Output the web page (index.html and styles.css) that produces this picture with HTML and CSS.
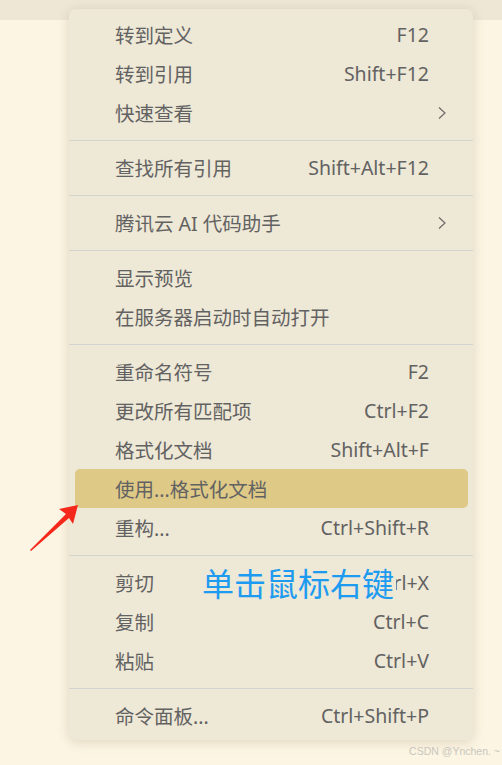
FILE: index.html
```html
<!DOCTYPE html>
<html lang="zh-CN">
<head>
<meta charset="utf-8">
<link rel="stylesheet" href="styles.css">
</head>
<body>
<div class="topbar"></div>
<div class="stage">
  <div class="menu">
    <div class="row"><span class="label">转到定义</span><span class="key">F12</span><span class="sub"></span></div>
    <div class="row"><span class="label">转到引用</span><span class="key">Shift+F12</span><span class="sub"></span></div>
    <div class="row"><span class="label">快速查看</span><span class="key"></span><span class="sub"><svg viewBox="0 0 8 12" width="8" height="12"><polyline points="1,0.5 7,6 1,11.5" fill="none" stroke="#6b6b6b" stroke-width="1.2"/></svg></span></div>
    <div class="sep"></div>
    <div class="row"><span class="label">查找所有引用</span><span class="key">Shift+Alt+F12</span><span class="sub"></span></div>
    <div class="sep"></div>
    <div class="row"><span class="label">腾讯云 AI 代码助手</span><span class="key"></span><span class="sub"><svg viewBox="0 0 8 12" width="8" height="12"><polyline points="1,0.5 7,6 1,11.5" fill="none" stroke="#6b6b6b" stroke-width="1.2"/></svg></span></div>
    <div class="sep"></div>
    <div class="row"><span class="label">显示预览</span><span class="key"></span><span class="sub"></span></div>
    <div class="row"><span class="label">在服务器启动时自动打开</span><span class="key"></span><span class="sub"></span></div>
    <div class="sep"></div>
    <div class="row"><span class="label">重命名符号</span><span class="key">F2</span><span class="sub"></span></div>
    <div class="row"><span class="label">更改所有匹配项</span><span class="key">Ctrl+F2</span><span class="sub"></span></div>
    <div class="row"><span class="label">格式化文档</span><span class="key">Shift+Alt+F</span><span class="sub"></span></div>
    <div class="row active"><span class="label">使用...格式化文档</span><span class="key"></span><span class="sub"></span></div>
    <div class="row"><span class="label">重构...</span><span class="key">Ctrl+Shift+R</span><span class="sub"></span></div>
    <div class="sep"></div>
    <div class="row"><span class="label">剪切</span><span class="key">Ctrl+X</span><span class="sub"></span></div>
    <div class="row"><span class="label">复制</span><span class="key">Ctrl+C</span><span class="sub"></span></div>
    <div class="row"><span class="label">粘贴</span><span class="key">Ctrl+V</span><span class="sub"></span></div>
    <div class="sep"></div>
    <div class="row"><span class="label">命令面板...</span><span class="key">Ctrl+Shift+P</span><span class="sub"></span></div>
  </div>
  <div class="note">单击鼠标右键</div>
  <svg class="arrow" viewBox="0 0 60 50" width="60" height="50">
    <polygon points="48,0 29,4 36,9 0,45 1,46 39,13 43,19" fill="#f5281c"/>
  </svg>
  <div class="mark">CSDN @Ynchen. ~</div>
</div>
</body>
</html>
```
FILE: styles.css
```css
* { box-sizing: border-box; }
html, body { margin: 0; padding: 0; }
body {
  width: 502px;
  height: 765px;
  overflow: hidden;
  background: #fcf5e3;
  font-family: "Noto Sans", "Noto Sans CJK SC", sans-serif;
  position: relative;
}
.topbar {
  height: 20px;
  background: #eee7d5;
}
.stage {
  position: absolute;
  inset: 0;
}
.menu {
  position: absolute;
  left: 69px;
  top: 9px;
  width: 404px;
  padding: 6px 0 5px;
  background: #eee8d6;
  border-radius: 7px;
  box-shadow: 0 2px 12px rgba(120, 100, 60, 0.22);
  display: flex;
  flex-direction: column;
}
.row {
  height: 39px;
  margin: 0 5px 0 6px;
  padding: 0 13px 0 40px;
  display: grid;
  grid-template-columns: 1fr auto 26px;
  align-items: center;
  color: #626262;
  font-size: 19.5px;
  border-radius: 5px;
  white-space: nowrap;
}
.row.active { background: #dfc987; }
.key { text-align: right; }
.sub { display: flex; justify-content: center; align-items: center; }
.sub svg { display: block; }
.sep {
  height: 16px;
  display: flex;
  align-items: center;
}
.sep::before {
  content: "";
  flex: 1;
  height: 1px;
  background: #d3d3cf;
}
.note {
  position: absolute;
  left: 202px;
  top: 562px;
  font-size: 32px;
  line-height: 40px;
  color: #1d9bf0;
  background: #eee8d6;
  font-family: "Noto Sans CJK SC", sans-serif;
  padding-right: 2px;
}
.arrow {
  position: absolute;
  left: 30px;
  top: 505px;
}
.mark {
  position: absolute;
  right: 2px;
  top: 745px;
  font-size: 10.5px;
  color: #c9c6bd;
  font-family: "Liberation Sans", sans-serif;
}
```
